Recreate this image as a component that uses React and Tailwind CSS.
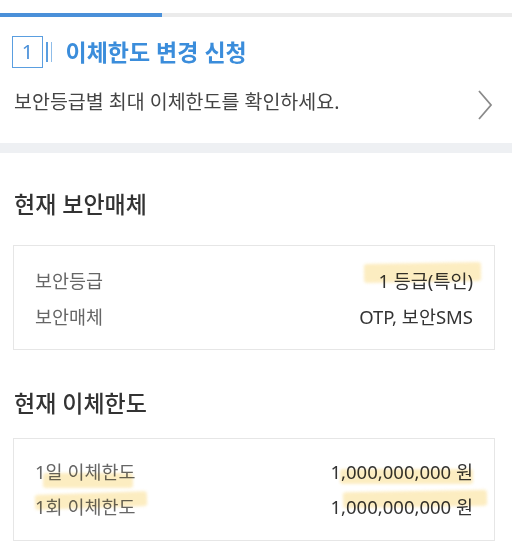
import React from "react";

const FONT = { fontFamily: '"Noto Sans", "Noto Sans CJK KR", sans-serif' };

function Hl({ className }) {
  return (
    <span
      className={
        "pointer-events-none absolute rounded-[3px] bg-[#fbe3a0] opacity-65 mix-blend-multiply blur-[1.5px] " +
        className
      }
    />
  );
}

function Row({ label, value, h = "h-[36px]" }) {
  return (
    <div className={"flex items-center justify-between " + h}>
      <span className="text-[18.5px] text-[#666]">{label}</span>
      <span className="text-[18.5px] text-[#333]">{value}</span>
    </div>
  );
}

export default function App() {
  return (
    <div className="w-[512px] h-[560px] overflow-hidden bg-white" style={FONT}>
      {/* progress */}
      <div className="h-[13px]" />
      <div className="flex h-[4px] bg-[#ebebeb]">
        <div className="w-[162px] bg-[#4a90d9]" />
      </div>

      {/* title */}
      <div className="flex items-center pl-[12px] pt-[19px]">
        <div className="flex h-[32px] w-[31px] items-center justify-center border-[1.5px] border-[#5a9ee0] text-[20px] text-[#4a90d9]">
          1
        </div>
        <div className="ml-[3px] flex h-[20px] gap-[3px]">
          <span className="w-[1.5px] bg-[#5a9ee0]" />
          <span className="w-[1px] bg-[#8fbde9]" />
        </div>
        <h1 className="ml-[14px] text-[23px] font-bold leading-[32px] text-[#3b8ddb]">
          이체한도 변경 신청
        </h1>
      </div>

      {/* subtitle */}
      <div className="mt-[22px] flex items-start justify-between pl-[14px] pr-[19px] pb-[23px]">
        <p className="text-[19.5px] leading-[24px] text-[#444]">
          보안등급별 최대 이체한도를 확인하세요.
        </p>
        <svg width="16" height="30" viewBox="0 0 16 30" fill="none">
          <path d="M2 1 L14 15 L2 29" stroke="#8a8a8a" strokeWidth="1.8" />
        </svg>
      </div>

      <div className="h-[10px] bg-[#eef0f3]" />

      {/* section 1 */}
      <h2 className="mt-[36px] pl-[14px] text-[23px] font-medium leading-[30px] text-[#333]">
        현재 보안매체
      </h2>
      <div className="relative ml-[13px] mr-[17px] mt-[26px] border border-[#e6e6e6] px-[21px] pt-[17px] pb-[14px]">
        <Row label="보안등급" value="1 등급(특인)" />
        <Row label="보안매체" value="OTP, 보안SMS" />
        <Hl className="left-[350px] top-[17px] h-[19px] w-[117px] -rotate-1" />
      </div>

      {/* section 2 */}
      <h2 className="mt-[38px] pl-[14px] text-[23px] font-medium leading-[30px] text-[#333]">
        현재 이체한도
      </h2>
      <div className="relative ml-[13px] mr-[17px] mt-[20px] border border-[#e6e6e6] px-[21px] pt-[15px] pb-[16px]">
        <Row label="1일 이체한도" value="1,000,000,000 원" h="h-[35px]" />
        <Row label="1회 이체한도" value="1,000,000,000 원" h="h-[35px]" />
        <Hl className="left-[29px] top-[34px] h-[15px] w-[90px]" />
        <Hl className="left-[326px] top-[30px] h-[15px] w-[133px]" />
        <Hl className="left-[21px] top-[54px] h-[15px] w-[112px] -rotate-2" />
        <Hl className="left-[329px] top-[52px] h-[16px] w-[144px] -rotate-1" />
      </div>
    </div>
  );
}
